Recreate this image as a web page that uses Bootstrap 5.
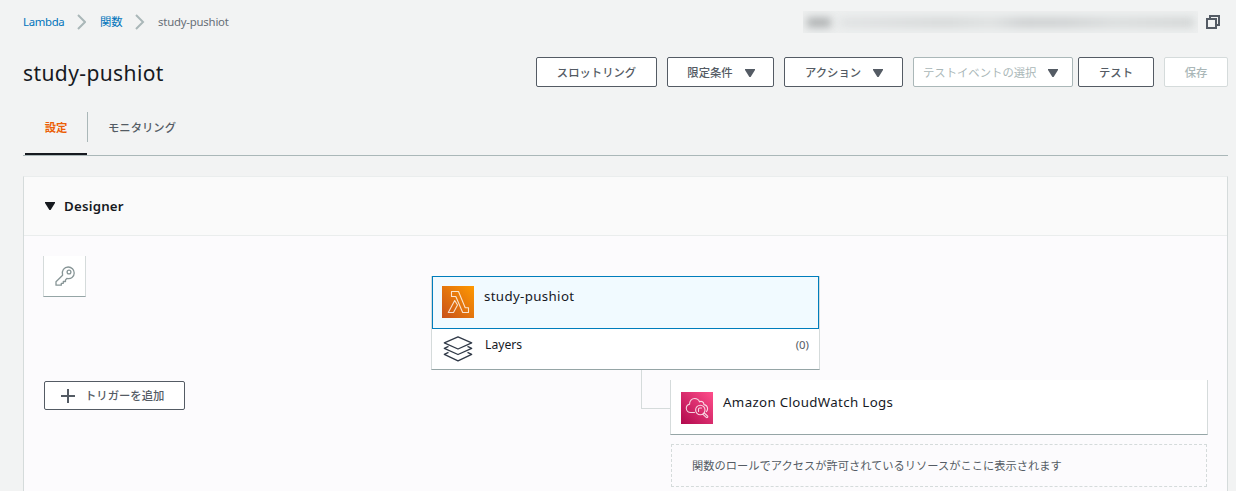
<!DOCTYPE html>
<html lang="ja">
<head>
<meta charset="utf-8">
<meta name="viewport" content="width=device-width, initial-scale=1">
<title>study-pushiot - Lambda</title>
<link href="https://cdn.jsdelivr.net/npm/bootstrap@5.3.0/dist/css/bootstrap.min.css" rel="stylesheet">
<style>
body{background:#f2f3f3;font:11.35px/18px "Noto Sans","Noto Sans CJK JP",sans-serif;color:#16191f;height:491px;overflow:hidden}
svg{display:block;flex:none}
.page{padding:0 8px 0 23px}
.crumbs{height:44px;color:#687078}
.crumbs a{color:#0073bb;text-decoration:none}
.crumb-root{width:53px;letter-spacing:-.3px}
.crumb-list{width:35px;margin-left:14px}
.crumb-here{margin-left:13px;letter-spacing:-.2px}
.redacted{width:395px;height:22px;overflow:hidden;background:#edefef}
.smudge{height:9px;filter:blur(4px)}
.smudge-name{width:24px;background:#a8abac}
.smudge-value{background:linear-gradient(90deg,#dfe1e2,#d3d6d6 30%,#dcdfdf 43%,#c9cccd 52%,#cbcecf 64%,#d8dbdb 78%,#cfd2d2)}
.title-row{height:56px}
.title-row h1{font-size:21px;line-height:28px;font-weight:400;margin:1px 0 0;letter-spacing:.4px}
.cbtn{height:30px;padding:1px 0 0;border:1px solid #545b64;border-radius:2px;background:#fff;color:#545b64;font-size:11.35px;line-height:18px;font-weight:500;display:flex;align-items:center;justify-content:center}
.cbtn:disabled{background:#fff;border-color:#d5dbdb;color:#aab7b8;opacity:1}
.w-throttle{width:121px}.w-qualifier{width:107px}.w-action{width:119px}.w-test{width:76px}.w-save{width:64px}
.gap-before{margin-left:10px}
.gap-tight{margin-left:5px}
.caret{margin:0 -1px 0 12px}
.pick{width:160px;border-color:#aab7b8;color:#aab7b8;font-weight:400;justify-content:flex-start;padding-left:9px}
.tabs{height:56px;border-bottom:1px solid #aab7b8;padding-top:12px}
.tabs a{display:block;text-decoration:none;color:#545b64;font-weight:500;line-height:31px;height:44px}
.tabs .current{width:62px;margin-left:2px;color:#eb5f07;font-weight:700;text-align:center;border-bottom:2px solid #16191f;height:43px}
.tabs .next{border-left:1px solid #aab7b8;height:30px;padding-left:20px}
.panel{margin-top:20px;height:330px;border:1px solid #d5dbdb;border-top-color:#eaeded;background:#fcfbfd}
.panel-head{height:59px;background:#fafafa;border-bottom:1px solid #eaeded;padding-left:21px}
.panel-head h2{font-size:13.3px;line-height:20px;font-weight:600;margin:0 0 0 9px;letter-spacing:.2px}
.side{width:407px;padding:20px 0 0 19px}
.raised{background:#fff;border:1px solid #d5dbdb;border-top:0;border-bottom-color:#95a5a6}
.key-box{width:43px;height:41px}
.add-trigger{width:141px;height:29px;margin:84px 0 0 1px;justify-content:flex-start;padding-left:16px}
.add-trigger svg{margin-right:10px}
.flow{width:777px;padding-top:40px}
.fn{width:389px;height:94px}
.fn-head{width:387px;height:53px;border:1px solid #007dbc;background:#f1faff;padding:9px}
.label{font-size:13.3px;line-height:20px;letter-spacing:.35px;margin-left:10px}
.fn-layers{height:40px;padding:6px 10px 0 11px;line-height:20px}
.layers-name{font-size:12.2px;margin-left:12px}
.layers-count{color:#545b64}
.elbow{width:29px;height:39px;margin-left:210px;border-left:1px solid #d5dbdb;border-bottom:1px solid #d5dbdb}
.outputs{width:538px;padding-top:10px}
.service{height:55px;padding:12px 10px}
.hint{height:43px;width:536px;margin:9px 0 0 1px;border:1px dashed #d5dbdb;color:#545b64;padding:1px 0 0 20px;font-size:11.25px}
</style>
</head>
<body>
<div class="page">
  <nav class="crumbs d-flex align-items-center">
    <a class="crumb-root" href="#">Lambda</a>
    <svg width="10" height="16" viewBox="0 0 10 16" fill="none" stroke="#aab7b8" stroke-width="2"><path d="M2 1l7 7-7 7"/></svg>
    <a class="crumb-list" href="#">関数</a>
    <svg width="10" height="16" viewBox="0 0 10 16" fill="none" stroke="#aab7b8" stroke-width="2"><path d="M1 1l7 7-7 7"/></svg>
    <span class="crumb-here">study-pushiot</span>
    <div class="redacted ms-auto d-flex align-items-center"><div class="smudge smudge-name ms-1"></div><div class="smudge smudge-value flex-grow-1 ms-2 me-1"></div></div>
    <svg class="ms-2 me-2" width="14" height="14" viewBox="0 0 14 14" fill="none" stroke="#545b64" stroke-width="2"><path d="M4 3V1h9v9h-2M1 4h9v9H1z"/></svg>
  </nav>
  <header class="title-row d-flex justify-content-between align-items-center">
    <h1>study-pushiot</h1>
    <div class="d-flex">
      <button class="btn cbtn w-throttle">スロットリング</button>
      <button class="btn cbtn w-qualifier gap-before">限定条件<svg class="caret" width="10" height="8" viewBox="0 0 10 8"><path d="M0 0h10v1L5.6 8H4.4L0 1z" fill="#545b64"/></svg></button>
      <button class="btn cbtn w-action gap-before">アクション<svg class="caret" width="10" height="8" viewBox="0 0 10 8"><path d="M0 0h10v1L5.6 8H4.4L0 1z" fill="#545b64"/></svg></button>
      <button class="btn cbtn pick gap-before">テストイベントの選択<svg class="caret" width="10" height="8" viewBox="0 0 10 8"><path d="M0 0h10v1L5.6 8H4.4L0 1z" fill="#545b64"/></svg></button>
      <button class="btn cbtn w-test gap-tight">テスト</button>
      <button class="btn cbtn w-save gap-before" disabled>保存</button>
    </div>
  </header>
  <nav class="tabs d-flex"><a class="current" href="#">設定</a><a class="next" href="#">モニタリング</a></nav>
  <section class="panel">
    <div class="panel-head d-flex align-items-center">
      <svg width="10" height="8" viewBox="0 0 10 8"><path d="M0 0h10v1L5.6 8H4.4L0 1z" fill="#16191f"/></svg>
      <h2>Designer</h2>
    </div>
    <div class="d-flex">
      <div class="side">
        <div class="raised key-box d-flex align-items-center justify-content-center">
          <svg width="20" height="20" viewBox="0 0 20 20" fill="none" stroke="#879596" stroke-width="1.3" stroke-linejoin="round"><path d="M7.600 9.200C6.200 4.600 9.300 1 13.200 1c3.400 0 6 2.600 6 5.900 0 4-3.300 6.400-7.300 5.500L10.500 14v1.500H8.300v1.800H6.300v1.900H1V15.700z"/><circle cx="14" cy="6" r="1.900"/></svg>
        </div>
        <button class="btn cbtn add-trigger"><svg width="14" height="14" viewBox="0 0 14 14" stroke="#545b64" stroke-width="2"><path d="M7 0v14M0 7h14"/></svg>トリガーを追加</button>
      </div>
      <div class="flow">
        <div class="raised fn">
          <div class="fn-head d-flex">
            <svg width="32" height="32" viewBox="0 0 32 32"><defs><linearGradient id="lam" x1="0" y1="1" x2="1" y2="0"><stop stop-color="#c8511b"/><stop offset="1" stop-color="#f90"/></linearGradient></defs><path fill="url(#lam)" d="M0 0h32v32H0z"/><path d="M9.500 5.500h7l6.700 16.200h3.300v4.800h-5.800L13.800 10.500H9.500zM12.700 14.500L6.300 26.500h5.200l4-7.500z" fill="none" stroke="#fff" stroke-opacity=".8" stroke-width="1.100" stroke-linejoin="round"/></svg>
            <span class="label">study-pushiot</span>
          </div>
          <div class="fn-layers d-flex align-items-start">
            <svg width="30" height="28" viewBox="0 0 30 28" fill="none" stroke="#303947" stroke-width="1.300" stroke-linejoin="round"><path d="M15 1.800l13.700 6L15 14 1.300 7.800zM5.500 11.300l-4.200 2L15 19.500l13.700-6.200-4.200-2M5.500 17.300l-4.200 2L15 25.800l13.700-6.500-4.200-2"/></svg>
            <span class="layers-name">Layers</span><span class="layers-count ms-auto">(0)</span>
          </div>
        </div>
        <div class="d-flex">
          <div class="elbow"></div>
          <div class="outputs">
            <div class="raised service d-flex">
              <svg width="32" height="32" viewBox="0 0 32 32"><defs><linearGradient id="cw" x1="0" y1="1" x2="1" y2="0"><stop stop-color="#b0084d"/><stop offset="1" stop-color="#ff4f8b"/></linearGradient></defs><path fill="url(#cw)" d="M0 0h32v32H0z"/><g fill="none" stroke="#fff" stroke-opacity=".8" stroke-width="1.100" stroke-linecap="round"><path d="M13.500 20.500H9.700C7.200 20.500 5.300 18.700 5.300 16.300c0-2.200 1.300-3.700 3.300-4.200C8.500 8.800 10.700 6.500 13.700 6.500c2.200 0 4 1.200 4.800 3.200 2.200-1 4.300.3 4.500 2.900 2.200.5 3.500 2 3.600 4.100 0 1.200-.5 2.200-1.200 2.900"/><circle cx="19.300" cy="18" r="4.700"/><path d="M17.500 19.500v-2.500q0-1 1-1h2M22 22.300l3.200 3c1 .8 2.200-.4 1.300-1.300l-3.200-3"/></g></svg>
              <span class="label">Amazon CloudWatch Logs</span>
            </div>
            <div class="hint d-flex align-items-center">関数のロールでアクセスが許可されているリソースがここに表示されます</div>
          </div>
        </div>
      </div>
    </div>
  </section>
</div>
<script src="https://cdn.jsdelivr.net/npm/bootstrap@5.3.0/dist/js/bootstrap.bundle.min.js"></script>
</body>
</html>
